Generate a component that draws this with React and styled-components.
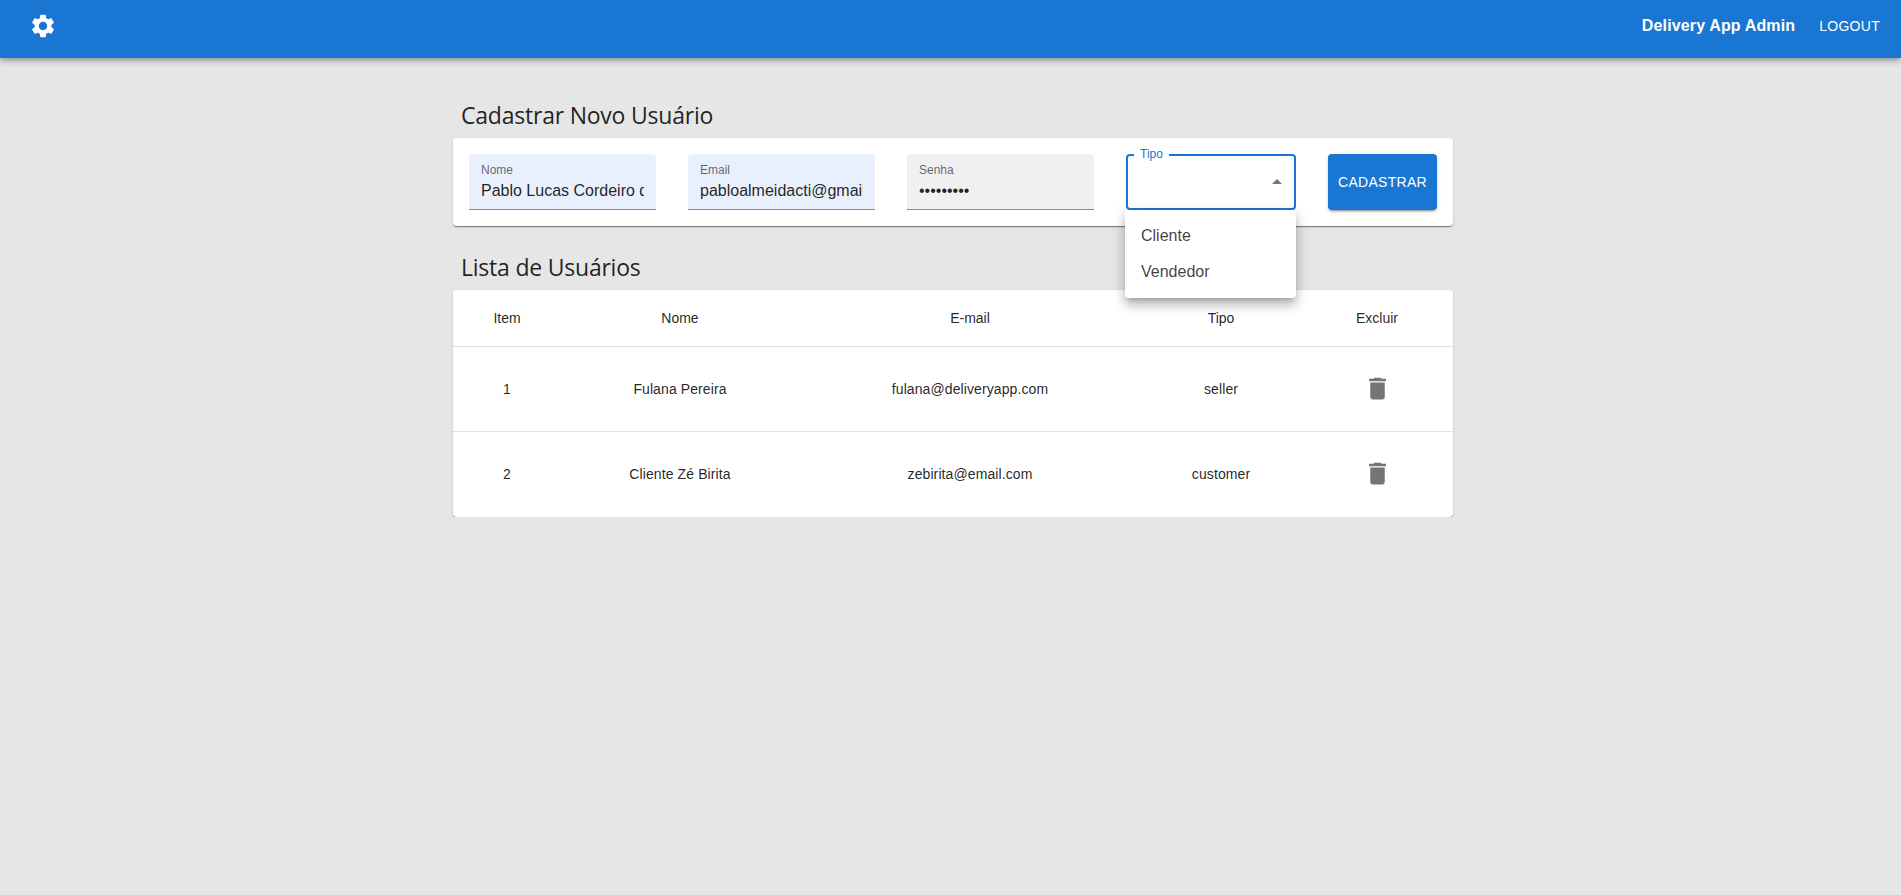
import styled, { createGlobalStyle } from "styled-components";
import { MdSettings, MdDelete, MdArrowDropUp } from "react-icons/md";

const GlobalStyle = createGlobalStyle`
  html, body {
    margin: 0;
    background: #e6e6e6;
    font-family: "Liberation Sans", Arial, sans-serif;
  }
  * {
    box-sizing: border-box;
  }
`;

const AppBar = styled.header`
  height: 58px;
  padding: 0 13px 6px 29px;
  display: flex;
  align-items: center;
  justify-content: space-between;
  background: #1976d2;
  color: #fff;
  box-shadow: 0 2px 4px -1px rgba(0, 0, 0, 0.2), 0 4px 5px 0 rgba(0, 0, 0, 0.14), 0 1px 10px 0 rgba(0, 0, 0, 0.12);
`;

const BarRight = styled.div`
  display: flex;
  align-items: center;
  gap: 16px;
`;

const BarTitle = styled.span`
  font-size: 16px;
  font-weight: 700;
  letter-spacing: 0.14px;
`;

const LogoutButton = styled.button`
  padding: 6px 8px;
  border: 0;
  background: none;
  color: #fff;
  font: 400 14px/24px "Liberation Sans", Arial, sans-serif;
  letter-spacing: 0.02em;
  text-transform: uppercase;
`;

const Main = styled.main`
  width: 1000px;
  margin-left: 453px;
  padding-top: 41px;
`;

const SectionTitle = styled.h2`
  margin: 0 0 7px;
  padding-left: 8px;
  font: 400 23px/32px "Open Sans", sans-serif;
  letter-spacing: -0.22px;
  color: rgba(0, 0, 0, 0.87);
`;

const Card = styled.section`
  background: #fff;
  border-radius: 4px;
  box-shadow: 0 2px 1px -1px rgba(0, 0, 0, 0.3), 0 1px 1px 0 rgba(0, 0, 0, 0.2), 0 1px 3px 0 rgba(0, 0, 0, 0.12);
`;

const FormCard = styled(Card)`
  display: flex;
  gap: 32px;
  padding: 16px;
  margin-bottom: 25px;
`;

const FilledField = styled.label`
  width: 187px;
  height: 56px;
  padding: 9px 12px 0;
  display: block;
  border-radius: 4px 4px 0 0;
  border-bottom: 1px solid rgba(0, 0, 0, 0.42);
  background: ${(p) => (p.$autofill ? "#e8f0fe" : "#f0f0f0")};
`;

const FieldLabel = styled.span`
  display: block;
  font-size: 12px;
  line-height: 14px;
  color: rgba(0, 0, 0, 0.6);
`;

const FieldInput = styled.input`
  width: 100%;
  height: 23px;
  margin-top: 2px;
  padding: 0;
  display: block;
  border: 0;
  outline: 0;
  background: none;
  color: rgba(0, 0, 0, 0.87);
  font: 400 16px/23px "Liberation Sans", Arial, sans-serif;
`;

const SelectWrap = styled.div`
  position: relative;
  width: 170px;
  height: 56px;
`;

const Outline = styled.fieldset`
  height: 56px;
  margin: 0;
  padding: 0 5px 0 6px;
  display: flex;
  align-items: center;
  justify-content: flex-end;
  border: 2px solid #1976d2;
  border-radius: 4px;
  color: rgba(0, 0, 0, 0.54);
`;

const OutlineLegend = styled.legend`
  height: 2px;
  padding: 0 6px;
  font-size: 12px;
  line-height: 0;
  color: #1976d2;
`;

const Menu = styled.ul`
  position: absolute;
  top: 56px;
  left: -1px;
  width: 171px;
  margin: 0;
  padding: 8px 0;
  list-style: none;
  background: #fff;
  border-radius: 4px;
  box-shadow: 0 5px 5px -3px rgba(0, 0, 0, 0.2), 0 8px 10px 1px rgba(0, 0, 0, 0.14), 0 3px 14px 2px rgba(0, 0, 0, 0.12);
`;

const MenuItem = styled.li`
  height: 36px;
  padding: 0 16px;
  display: flex;
  align-items: center;
  font-size: 16px;
  color: rgba(0, 0, 0, 0.76);
`;

const SubmitButton = styled.button`
  width: 109px;
  height: 56px;
  padding: 0;
  border: 0;
  border-radius: 4px;
  background: #1976d2;
  color: #fff;
  font: 400 14px/24px "Liberation Sans", Arial, sans-serif;
  letter-spacing: 0.02em;
  text-transform: uppercase;
  box-shadow: 0 3px 1px -2px rgba(0, 0, 0, 0.2), 0 2px 2px 0 rgba(0, 0, 0, 0.14), 0 1px 5px 0 rgba(0, 0, 0, 0.12);
`;

const Table = styled.table`
  width: 100%;
  table-layout: fixed;
  border-collapse: collapse;
`;

const HeadCell = styled.th`
  height: 56px;
  padding: 0;
  border-bottom: 1px solid #e0e0e0;
  font-size: 14px;
  font-weight: 400;
  color: rgba(0, 0, 0, 0.87);
  width: ${(p) => p.$width}px;
`;

const Cell = styled.td`
  height: ${(p) => (p.$last ? "86px" : "85px")};
  padding: 0;
  border-bottom: ${(p) => (p.$last ? "0" : "1px solid #e0e0e0")};
  font-size: 14px;
  letter-spacing: 0.1px;
  text-align: center;
  color: rgba(0, 0, 0, 0.87);
`;

const DeleteButton = styled.button`
  margin-top: 2px;
  padding: 0;
  display: inline-flex;
  border: 0;
  background: none;
  color: #757575;
`;

const columns = [
  ["Item", 108],
  ["Nome", 238],
  ["E-mail", 342],
  ["Tipo", 160],
  ["Excluir", 152],
];

const users = [
  { id: 1, name: "Fulana Pereira", email: "fulana@deliveryapp.com", role: "seller" },
  { id: 2, name: "Cliente Zé Birita", email: "zebirita@email.com", role: "customer" },
];

const App = () => {
  return (
    <>
      <GlobalStyle />
      <AppBar>
        <MdSettings size={28} />
        <BarRight>
          <BarTitle>Delivery App Admin</BarTitle>
          <LogoutButton>Logout</LogoutButton>
        </BarRight>
      </AppBar>
      <Main>
        <SectionTitle>Cadastrar Novo Usuário</SectionTitle>
        <FormCard>
          <FilledField $autofill>
            <FieldLabel>Nome</FieldLabel>
            <FieldInput readOnly value="Pablo Lucas Cordeiro de Almeida" />
          </FilledField>
          <FilledField $autofill>
            <FieldLabel>Email</FieldLabel>
            <FieldInput readOnly value="pabloalmeidacti@gmail.com" />
          </FilledField>
          <FilledField>
            <FieldLabel>Senha</FieldLabel>
            <FieldInput readOnly type="password" value="123456789" />
          </FilledField>
          <SelectWrap>
            <Outline>
              <OutlineLegend>Tipo</OutlineLegend>
              <MdArrowDropUp size={24} />
            </Outline>
            <Menu>
              <MenuItem>Cliente</MenuItem>
              <MenuItem>Vendedor</MenuItem>
            </Menu>
          </SelectWrap>
          <SubmitButton>Cadastrar</SubmitButton>
        </FormCard>
        <SectionTitle>Lista de Usuários</SectionTitle>
        <Card>
          <Table>
            <thead>
              <tr>
                {columns.map(([label, width]) => (
                  <HeadCell key={label} $width={width}>{label}</HeadCell>
                ))}
              </tr>
            </thead>
            <tbody>
              {users.map((user, index) => {
                const last = index === users.length - 1;
                return (
                  <tr key={user.id}>
                    <Cell $last={last}>{user.id}</Cell>
                    <Cell $last={last}>{user.name}</Cell>
                    <Cell $last={last}>{user.email}</Cell>
                    <Cell $last={last}>{user.role}</Cell>
                    <Cell $last={last}>
                      <DeleteButton><MdDelete size={29} /></DeleteButton>
                    </Cell>
                  </tr>
                );
              })}
            </tbody>
          </Table>
        </Card>
      </Main>
    </>
  );
};

export default App;
